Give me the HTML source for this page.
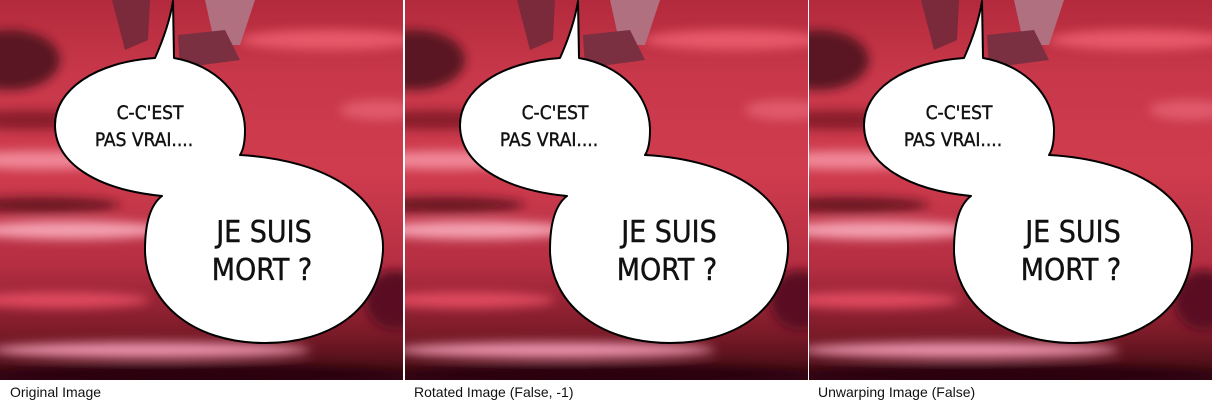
<!DOCTYPE html>
<html><head><meta charset="utf-8"><style>
body{margin:0;width:1212px;height:405px;background:#fff;overflow:hidden;position:relative;font-family:"Liberation Sans",sans-serif}
.p{position:absolute;top:0;width:403px;height:380px}
.cap{position:absolute;top:384px;font-size:14px;color:#111}
</style></head><body>
<svg width="0" height="0" style="position:absolute">
<defs>
<linearGradient id="bg" x1="0" y1="0" x2="0" y2="1">
<stop offset="0" stop-color="#b32a3c"/><stop offset="0.2" stop-color="#c8384a"/>
<stop offset="0.45" stop-color="#cf3c4e"/><stop offset="0.7" stop-color="#b52e42"/>
<stop offset="0.88" stop-color="#7a1a28"/><stop offset="1" stop-color="#3a0a12"/>
</linearGradient>
<filter id="bl"><feGaussianBlur stdDeviation="5"/></filter>
<g id="panel">
<rect width="403" height="380" fill="url(#bg)"/>
<g filter="url(#bl)">
<ellipse cx="10" cy="60" rx="50" ry="30" fill="#5a1220"/>
<ellipse cx="330" cy="40" rx="90" ry="10" fill="#e8586a"/>
<ellipse cx="40" cy="160" rx="90" ry="9" fill="#f08898"/>
<ellipse cx="30" cy="120" rx="70" ry="10" fill="#8a1c2c"/>
<ellipse cx="70" cy="230" rx="100" ry="9" fill="#f4a0b0"/>
<ellipse cx="40" cy="205" rx="80" ry="8" fill="#6a1422"/>
<ellipse cx="60" cy="300" rx="90" ry="8" fill="#e04a5e"/>
<ellipse cx="150" cy="350" rx="160" ry="8" fill="#e890a8"/>
<ellipse cx="380" cy="110" rx="40" ry="10" fill="#e05a6c"/>
<ellipse cx="395" cy="300" rx="30" ry="30" fill="#5a1020"/>
<ellipse cx="200" cy="375" rx="220" ry="10" fill="#2a060c"/>
</g>
<path d="M112 0 L150 0 L148 40 L125 50 Z" fill="#7a2a3a"/>
<path d="M205 0 L255 0 L240 45 L215 45 Z" fill="#b07080"/>
<path d="M178 35 L225 30 L240 60 L180 68 Z" fill="#7a3040"/>
<path d="M173 1 L174 58 C215 65 245 95 245 130 C245 145 242 152 240 155 C330 160 385 200 383 250 C380 310 330 343 265 343 C190 343 145 300 145 250 C145 225 150 205 162 196 C100 190 55 165 55 125 C55 90 95 62 155 58 C163 40 170 20 173 1 Z" fill="#fff" stroke="#000" stroke-width="2" stroke-linejoin="round"/>
<g font-family="DejaVu Sans Condensed, DejaVu Sans, sans-serif" fill="#111" text-anchor="middle" stroke="#111" stroke-width="0.4">
<text x="150" y="119" font-size="19">C-C'EST</text>
<text x="144" y="146" font-size="19">PAS VRAI....</text>
<text x="264" y="242" font-size="30">JE SUIS</text>
<text x="262" y="280" font-size="30">MORT ?</text>
</g>
</g>
</defs></svg>
<svg class="p" style="left:0"><use href="#panel"/></svg>
<svg class="p" style="left:405px"><use href="#panel"/></svg>
<svg class="p" style="left:809px"><use href="#panel"/></svg>
<div class="cap" style="left:10px">Original Image</div>
<div class="cap" style="left:414px">Rotated Image (False, -1)</div>
<div class="cap" style="left:818px">Unwarping Image (False)</div>
</body></html>
